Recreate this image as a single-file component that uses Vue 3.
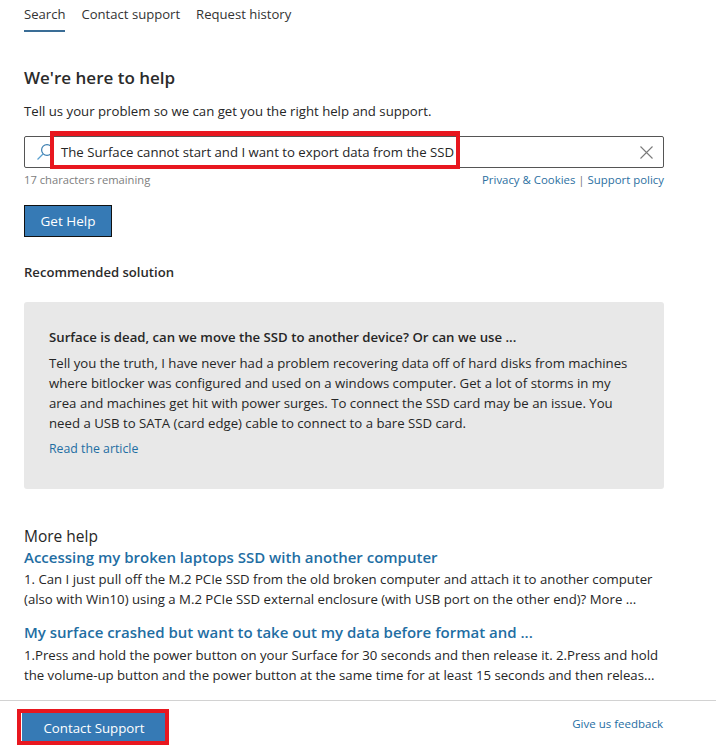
<script setup>
const tabs = ['Search', 'Contact support', 'Request history']
</script>

<template>
  <div class="page">
    <div class="main">
      <nav class="tabs">
        <a v-for="(t, i) in tabs" :key="t" class="tab" :class="{ active: i === 0 }">{{ t }}</a>
      </nav>
      <h1 class="title">We're here to help</h1>
      <p class="intro">Tell us your problem so we can get you the right help and support.</p>
      <div class="search">
        <svg class="lens" width="18" height="18" viewBox="0 0 18 18" fill="none" stroke="#3b7eb0" stroke-width="1.2">
          <circle cx="11" cy="7" r="5.4" />
          <path d="M7 11 L1.5 16.5" stroke="#5aa0cf" />
        </svg>
        <span class="query">The Surface cannot start and I want to export data from the SSD</span>
        <svg class="clear" width="13" height="13" viewBox="0 0 13 13" stroke="#7a7a7a" stroke-width="1.1">
          <path d="M0.5 0.5 L12.5 12.5 M12.5 0.5 L0.5 12.5" />
        </svg>
        <div class="mark query-mark"></div>
      </div>
      <div class="meta">
        <span class="count">17 characters remaining</span>
        <span class="links"><a>Privacy &amp; Cookies</a> <span class="sep">|</span> <a>Support policy</a></span>
      </div>
      <button class="help-btn">Get Help</button>
      <h2 class="rec">Recommended solution</h2>
      <section class="card">
        <h3>Surface is dead, can we move the SSD to another device? Or can we use ...</h3>
        <p>Tell you the truth, I have never had a problem recovering data off of hard disks from machines where bitlocker was configured and used on a windows computer. Get a lot of storms in my area and machines get hit with power surges. To connect the SSD card may be an issue. You need a USB to SATA (card edge) cable to connect to a bare SSD card.</p>
        <a>Read the article</a>
      </section>
      <h2 class="more">More help</h2>
      <article class="result">
        <a class="r-title">Accessing my broken laptops SSD with another computer</a>
        <p>1. Can I just pull off the M.2 PCIe SSD from the old broken computer and attach it to another computer (also with Win10) using a M.2 PCIe SSD external enclosure (with USB port on the other end)? More ...</p>
      </article>
      <article class="result second">
        <a class="r-title">My surface crashed but want to take out my data before format and ...</a>
        <p>1.Press and hold the power button on your Surface for 30 seconds and then release it. 2.Press and hold the volume-up button and the power button at the same time for at least 15 seconds and then releas...</p>
      </article>
    </div>
    <footer class="foot">
      <div class="contact-wrap"><button class="contact">Contact Support</button></div>
      <a class="feedback">Give us feedback</a>
    </footer>
  </div>
</template>

<style>
html, body { margin: 0; background: #fff; }
</style>

<style scoped>
.page {
  width: 716px;
  height: 754px;
  overflow: hidden;
  font-family: "Open Sans", "Noto Sans", sans-serif;
  font-size: 13.2px;
  color: #262626;
  box-sizing: border-box;
}
a { color: #1f6ea3; }
.main { padding: 0 52px 0 24px; height: 700px; box-sizing: border-box; }
.tabs { display: flex; gap: 16px; height: 32px; }
.tab { color: #333; font-size: 13.1px; line-height: 29px; height: 32px; box-sizing: border-box; }
.tab.active { border-bottom: 2px solid #3a6d96; }
.title { margin: 29px 0 0; font-size: 17px; line-height: 34px; font-weight: 600; color: #2b2b2b; }
.intro { margin: 6px 0 0; line-height: 20px; }
.search {
  position: relative;
  margin-top: 15px;
  height: 32px;
  border: 1px solid #555;
  border-radius: 2px;
  box-sizing: border-box;
  display: flex;
  align-items: center;
}
.lens { margin-left: 11px; flex: none; }
.query { margin-left: 7px; font-size: 13.2px; white-space: nowrap; }
.clear { margin-left: auto; margin-right: 10px; flex: none; }
.mark { position: absolute; border-style: solid; border-color: #e8171f; border-width: 5px 4px 4px; box-sizing: border-box; }
.query-mark { left: 25px; top: -6px; width: 410px; height: 38px; }
.meta { display: flex; justify-content: space-between; margin-top: 2px; height: 19px; line-height: 19px; font-size: 11.2px; }
.count { color: #7d7d7d; }
.links { font-size: 11.4px; }
.links a { color: #2c6f9f; }
.sep { color: #777; }
.help-btn {
  display: block;
  margin-top: 16px;
  width: 88px;
  height: 32px;
  background: #367ab5;
  border: 1px solid #111;
  color: #fff;
  font: inherit;
  font-size: 13.5px;
  padding: 0;
}
.rec { margin: 25px 0 0; font-size: 13.1px; line-height: 20px; font-weight: 600; color: #2b2b2b; }
.card {
  margin-top: 20px;
  height: 187px;
  background: #e8e8e8;
  border-radius: 3px;
  padding: 25px 25px;
  box-sizing: border-box;
}
.card h3 { margin: 0; font-size: 13.2px; line-height: 20px; font-weight: 600; }
.card p { margin: 6px 0 0; line-height: 20px; }
.card a { display: block; margin-top: 6px; line-height: 20px; font-size: 12.3px; }
.more { margin: 37px 0 0; font-size: 15.5px; line-height: 20px; font-weight: 500; color: #262626; }
.result { margin-top: 0; }
.result.second { margin-top: 12px; }
.r-title { display: block; color: #1f6ea3; font-size: 15px; line-height: 22px; font-weight: 600; white-space: nowrap; }
.result p { margin: 1px 0 0; line-height: 20px; }
.result.second p { margin-top: 2px; }
.foot {
  height: 54px;
  border-top: 1px solid #d2d2d2;
  padding: 0 53px 0 22px;
  display: flex;
  justify-content: space-between;
  box-sizing: border-box;
}
.contact-wrap { margin: 8px 0 0 -5px; border: 4px solid #e8171f; width: 152px; height: 36px; box-sizing: border-box; }
.contact {
  display: block;
  width: 100%;
  height: 100%;
  background: #367ab5;
  border: 0;
  border-left: 1px solid #fff;
  color: #fff;
  font: inherit;
  font-size: 13.3px;
  padding: 1px 0 0 1px;
}
.feedback { margin-top: 14px; font-size: 11.5px; line-height: 18px; }
</style>
